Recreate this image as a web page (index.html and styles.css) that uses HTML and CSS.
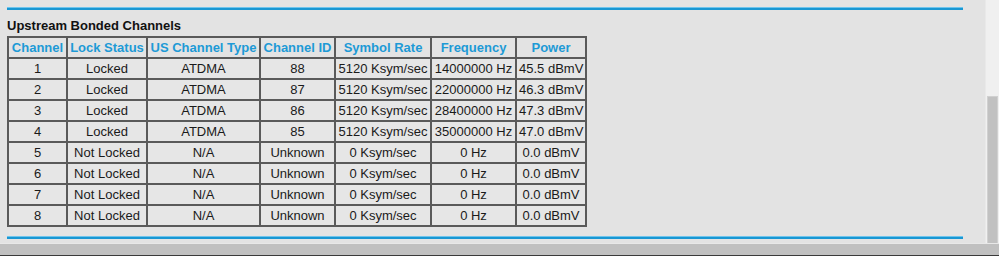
FILE: index.html
```html
<!DOCTYPE html>
<html lang="en">
<head>
<meta charset="utf-8">
<title>Upstream Bonded Channels</title>
<link rel="stylesheet" href="styles.css">
</head>
<body>
<div class="frame">
  <div class="viewport">
    <main class="content">
      <hr class="rule">
      <h2 class="section-title">Upstream Bonded Channels</h2>
      <table class="channels">
        <thead>
          <tr>
            <th class="c-ch">Channel</th>
            <th class="c-lock">Lock Status</th>
            <th class="c-type">US Channel Type</th>
            <th class="c-id">Channel ID</th>
            <th class="c-rate">Symbol Rate</th>
            <th class="c-freq">Frequency</th>
            <th class="c-pow">Power</th>
          </tr>
        </thead>
        <tbody>
          <tr><td>1</td><td>Locked</td><td>ATDMA</td><td>88</td><td>5120 Ksym/sec</td><td>14000000 Hz</td><td>45.5 dBmV</td></tr>
          <tr><td>2</td><td>Locked</td><td>ATDMA</td><td>87</td><td>5120 Ksym/sec</td><td>22000000 Hz</td><td>46.3 dBmV</td></tr>
          <tr><td>3</td><td>Locked</td><td>ATDMA</td><td>86</td><td>5120 Ksym/sec</td><td>28400000 Hz</td><td>47.3 dBmV</td></tr>
          <tr><td>4</td><td>Locked</td><td>ATDMA</td><td>85</td><td>5120 Ksym/sec</td><td>35000000 Hz</td><td>47.0 dBmV</td></tr>
          <tr><td>5</td><td>Not Locked</td><td>N/A</td><td>Unknown</td><td>0 Ksym/sec</td><td>0 Hz</td><td>0.0 dBmV</td></tr>
          <tr><td>6</td><td>Not Locked</td><td>N/A</td><td>Unknown</td><td>0 Ksym/sec</td><td>0 Hz</td><td>0.0 dBmV</td></tr>
          <tr><td>7</td><td>Not Locked</td><td>N/A</td><td>Unknown</td><td>0 Ksym/sec</td><td>0 Hz</td><td>0.0 dBmV</td></tr>
          <tr><td>8</td><td>Not Locked</td><td>N/A</td><td>Unknown</td><td>0 Ksym/sec</td><td>0 Hz</td><td>0.0 dBmV</td></tr>
        </tbody>
      </table>
      <hr class="rule rule-bottom">
    </main>
    <div class="vscroll"><div class="vthumb"></div></div>
  </div>
  <div class="hscroll"></div>
</div>
</body>
</html>
```
FILE: styles.css
```css
* { box-sizing: border-box; }

html, body {
  margin: 0;
  padding: 0;
  height: 256px;
  overflow: hidden;
  background: #e3e3e3;
  font-family: "Liberation Sans", Arial, sans-serif;
  color: #1a1a1a;
}

.frame {
  display: flex;
  flex-direction: column;
  height: 256px;
}

.viewport {
  display: flex;
  height: 243px;
}

.content {
  flex: 1;
  padding: 7px 22px 0 7px;
  background: #e3e3e3;
}

/* blue divider lines */
.rule {
  margin: 0;
  height: 3px;
  border: 0;
  border-top: 1px solid #6ec4ec;
  background: #1997d3;
}

.rule-bottom {
  margin-top: 9px;
}

.section-title {
  margin: 8px 0 3px;
  font-size: 13px;
  line-height: 15px;
  font-weight: bold;
  color: #111;
}

.channels {
  border-collapse: separate;
  border-spacing: 0;
  border: 1px solid #5a5a5a;
  table-layout: fixed;
  width: 580px;
  font-size: 13px;
}

.channels th,
.channels td {
  border: 1px solid #5a5a5a;
  height: 21px;
  padding: 0 2px;
  text-align: center;
  white-space: nowrap;
  background: #e6e6e6;
}

.channels th {
  color: #1d9ad6;
  font-weight: bold;
  background: #e3e3e3;
}

.c-ch { width: 59px; }
.c-lock { width: 80px; }
.c-type { width: 113px; }
.c-id { width: 75px; }
.c-rate { width: 96px; }
.c-freq { width: 85px; }
.c-pow { width: 70px; }

/* window scrollbars */
.vscroll {
  width: 14px;
  background: #f0f0f0;
  border-left: 1px solid #e9e9e9;
  padding: 96px 1px 0 1px;
}

.vthumb {
  height: 147px;
  background: #c1c1c1;
  border: 1px solid #d0d0d0;
  border-bottom: 0;
}

.hscroll {
  height: 13px;
  background: #c0c0c0;
  border-top: 1px solid #e8e8e8;
  border-bottom: 1px solid #3a3a3a;
}
```
